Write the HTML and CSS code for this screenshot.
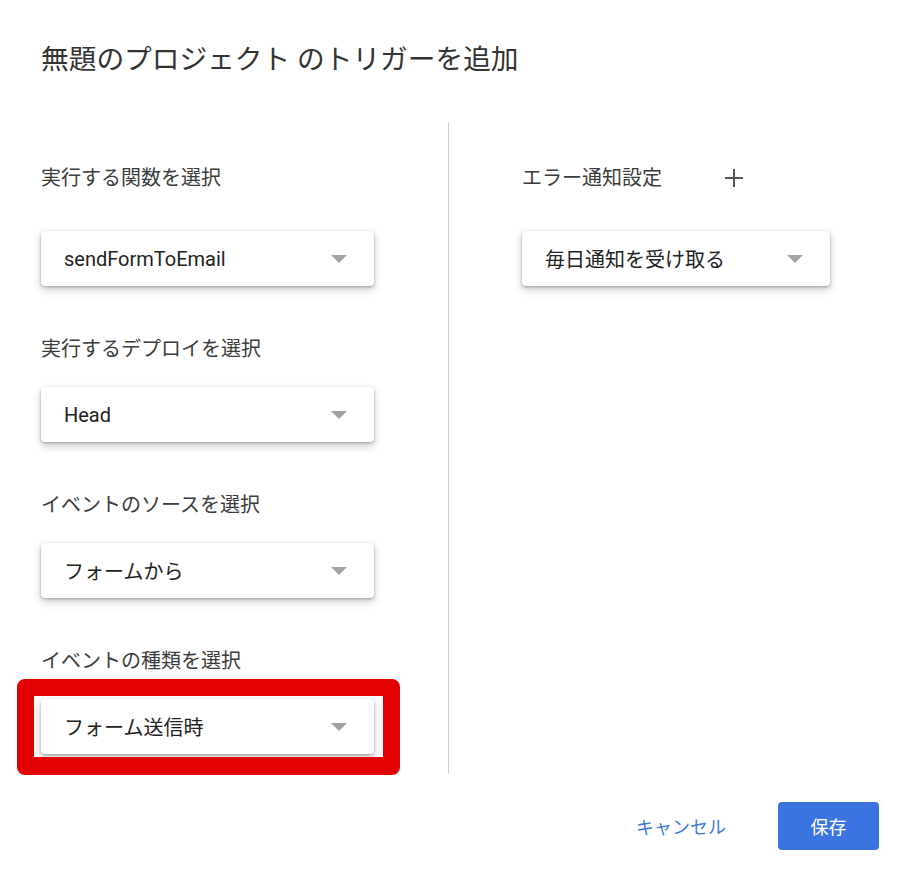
FILE: index.html
```html
<!DOCTYPE html>
<html lang="ja">
<head>
  <meta charset="UTF-8">
  <title>トリガーを追加</title>
  <link rel="stylesheet" href="styles.css">
</head>
<body>

  <div class="dialog">
    <h1 class="dialog-title">無題のプロジェクト のトリガーを追加</h1>

    <div class="dialog-body">
      <div class="col col-left">
        <div class="field">
          <div class="field-label first">実行する関数を選択</div>
          <div class="select">
            <span>sendFormToEmail</span>
            <span class="caret"></span>
          </div>
        </div>

        <div class="field">
          <div class="field-label">実行するデプロイを選択</div>
          <div class="select">
            <span>Head</span>
            <span class="caret"></span>
          </div>
        </div>

        <div class="field">
          <div class="field-label">イベントのソースを選択</div>
          <div class="select">
            <span>フォームから</span>
            <span class="caret"></span>
          </div>
        </div>

        <div class="field">
          <div class="field-label">イベントの種類を選択</div>
          <div class="select highlighted">
            <span>フォーム送信時</span>
            <span class="caret"></span>
          </div>
        </div>
      </div>

      <div class="col col-right">
        <div class="field">
          <div class="field-label first">
            <span>エラー通知設定</span>
            <button class="add-btn" title="追加">
              <svg width="20" height="20" viewBox="0 0 20 20">
                <path d="M10 1v18M1 10h18" stroke="#555" stroke-width="2" fill="none"/>
              </svg>
            </button>
          </div>
          <div class="select select-narrow">
            <span>毎日通知を受け取る</span>
            <span class="caret"></span>
          </div>
        </div>
      </div>
    </div>

    <div class="dialog-actions">
      <button class="btn-cancel">キャンセル</button>
      <button class="btn-save">保存</button>
    </div>
  </div>

</body>
</html>
```

FILE: styles.css
```css
body {
  margin: 0;
  background-color: white;
  font-family: Roboto, "Noto Sans CJK JP", sans-serif;
  color: #333;
}

.dialog {
  padding: 40px 45px 0 41px;
}

.dialog-title {
  margin: 0;
  font-size: 27.7px;
  font-weight: 400;
  line-height: 40px;
  color: #333;
}

.dialog-body {
  display: flex;
  margin-top: 42px;
}

.col-left {
  width: 407px;
  padding: 44px 0 20px 0;
  border-right: 1px solid #cdcdcd;
}

.col-right {
  padding: 44px 0 0 73px;
}

.field + .field {
  margin-top: 51px;
}

.field-label {
  display: flex;
  align-items: center;
  height: 24px;
  font-size: 20px;
  line-height: 24px;
  color: #3c3c3c;
  margin-bottom: 26px;
}

.field-label.first {
  margin-bottom: 41px;
}

.add-btn {
  margin-left: 62px;
  padding: 0;
  border: none;
  background: none;
  width: 20px;
  height: 20px;
  cursor: pointer;
}

.add-btn svg {
  display: block;
}

.select {
  position: relative;
  display: flex;
  align-items: center;
  justify-content: space-between;
  box-sizing: border-box;
  width: 333px;
  height: 55px;
  padding: 0 27px 0 23px;
  background-color: white;
  border-radius: 4px;
  box-shadow: 0 1px 3px rgba(0,0,0,0.28), 0 4px 10px rgba(0,0,0,0.2);
  font-size: 20px;
  color: #222;
}

.select-narrow {
  width: 308px;
}

.caret {
  width: 0;
  height: 0;
  border-left: 8px solid transparent;
  border-right: 8px solid transparent;
  border-top: 8px solid #a2a2a2;
}

/* 赤枠の注釈 */
.select.highlighted::after {
  content: "";
  position: absolute;
  top: -20px;
  left: -24px;
  right: -26px;
  bottom: -21px;
  border-style: solid;
  border-color: #e30000;
  border-width: 17px 17px 18px 17px;
  border-radius: 8px;
  pointer-events: none;
}

.dialog-actions {
  display: flex;
  justify-content: flex-end;
  align-items: center;
  margin-top: 28px;
}

.btn-cancel {
  padding: 0;
  margin-right: 52px;
  border: none;
  background: none;
  font-family: inherit;
  font-size: 18px;
  color: #3f7bdc;
  cursor: pointer;
}

.btn-save {
  width: 101px;
  height: 48px;
  border: none;
  border-radius: 4px;
  background-color: #3b74e0;
  color: white;
  font-family: inherit;
  font-size: 18px;
  cursor: pointer;
}
```
